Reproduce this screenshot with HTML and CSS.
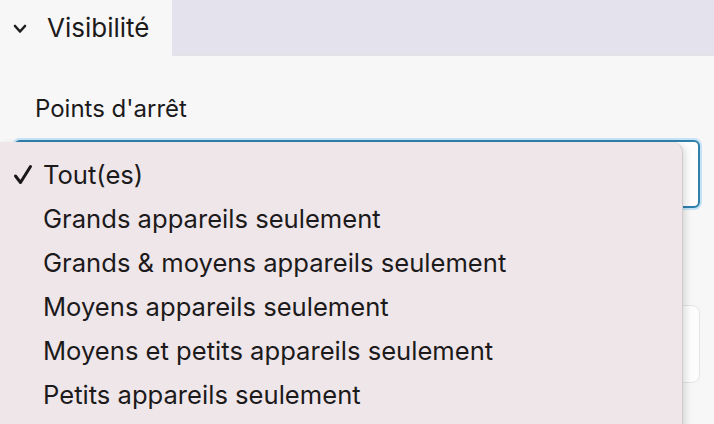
FILE: index.html
```html
<!DOCTYPE html>
<html lang="fr">
<head>
<meta charset="utf-8">
<title>Visibilité</title>
<link rel="stylesheet" href="styles.css">
</head>
<body>
<div class="header">
  <div class="tab">
    <svg class="chevron" width="14" height="10" viewBox="0 0 14 10"><path d="M2 2 L7 7.5 L12 2" fill="none" stroke="#1d1d1f" stroke-width="2.6" stroke-linecap="round" stroke-linejoin="round"/></svg>
    <span class="tab-label">Visibilité</span>
  </div>
  <div class="tab-rest"></div>
</div>
<div class="content">
  <div class="field-label">Points d'arrêt</div>
  <div class="select-box"></div>
  <div class="field-box"></div>
</div>
<ul class="menu">
  <li class="item checked"><svg class="check" width="20" height="22" viewBox="0 0 20 22"><path d="M2.5 12 L7.5 18.5 L17.5 2.5" fill="none" stroke="#1a1718" stroke-width="3" stroke-linecap="round" stroke-linejoin="round"/></svg>Tout(es)</li>
  <li class="item">Grands appareils seulement</li>
  <li class="item">Grands &amp; moyens appareils seulement</li>
  <li class="item">Moyens appareils seulement</li>
  <li class="item">Moyens et petits appareils seulement</li>
  <li class="item">Petits appareils seulement</li>
</ul>
</body>
</html>
```
FILE: styles.css
```css
html, body {
  margin: 0;
  padding: 0;
}
body {
  width: 714px;
  height: 424px;
  overflow: hidden;
  background: #f7f7f7;
  font-family: "Inter", "Liberation Sans", sans-serif;
  color: #1c1a1b;
  position: relative;
}
.header {
  display: flex;
  height: 56px;
}
.tab {
  width: 172px;
  background: #f7f7f7;
  display: flex;
  align-items: center;
  padding-left: 13px;
  box-sizing: border-box;
}
.chevron {
  margin-right: 20px;
  margin-top: 1px;
}
.tab-label {
  font-size: 26px;
  margin-top: -2px;
}
.tab-rest {
  flex: 1;
  background: #e4e3ed;
  border-bottom: 1px solid #e2e2e6;
}
.content {
  padding: 0 14px 0 14px;
}
.field-label {
  font-size: 24px;
  padding: 38px 0 0 21px;
  line-height: 30px;
  height: 46px;
}
.select-box {
  height: 64px;
  border: 2px solid #2f7fab;
  border-radius: 6px;
  background: #fdfdfd;
  box-shadow: 0 0 0 2px #c5e3f5;
}
.field-box {
  margin-top: 97px;
  height: 76px;
  border: 1px solid #e4e4e4;
  border-radius: 8px;
  background: #fcfcfc;
}
.menu {
  position: absolute;
  left: 0;
  top: 142px;
  width: 683px;
  height: 300px;
  margin: 0;
  padding: 11px 0 0 0;
  box-sizing: border-box;
  list-style: none;
  background: #efe6ea;
  border-radius: 0 10px 10px 0;
  border-right: 1px solid #cfcacd;
  box-shadow: 3px 2px 6px rgba(0,0,0,0.12);
}
.item {
  position: relative;
  height: 44px;
  line-height: 44px;
  padding-left: 43px;
  font-size: 25.6px;
  white-space: nowrap;
}
.check {
  position: absolute;
  left: 13px;
  top: 11px;
}
```
